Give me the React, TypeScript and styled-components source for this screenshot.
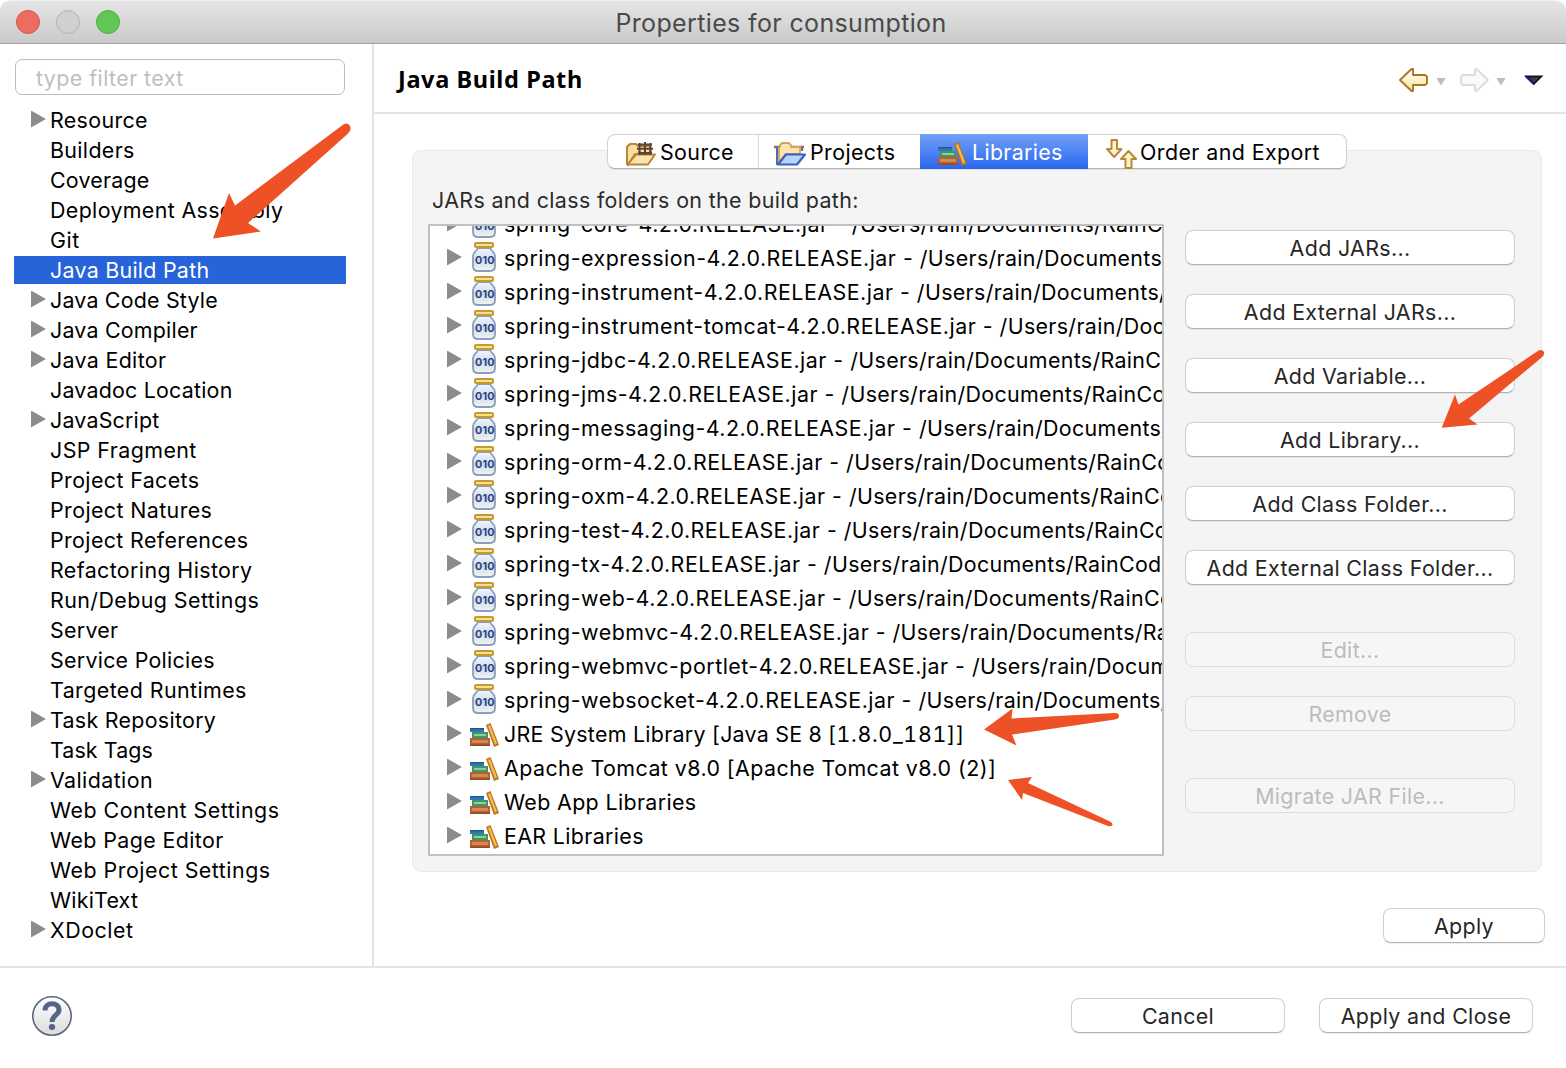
import React from "react";
import styled, { createGlobalStyle, css } from "styled-components";

const Global = createGlobalStyle`
  * { box-sizing: border-box; }
  html, body { margin: 0; padding: 0; background: #fff; }
  body { font-family: Inter, "Liberation Sans", sans-serif; font-size: 21.4px; letter-spacing: 0.37px; color: #000; overflow: hidden; }
`;

const Window = styled.div`
  position: relative;
  width: 1566px;
  height: 1068px;
  display: flex;
  flex-direction: column;
  background: #fff;
`;

const TitleBar = styled.header`
  height: 44px;
  flex: none;
  display: grid;
  grid-template-columns: 200px 1fr 204px;
  align-items: center;
  border-radius: 10px 10px 0 0;
  border-top: 1px solid #f2f2f2;
  border-bottom: 1px solid #a2a2a2;
  background: linear-gradient(#e5e5e5, #cacaca);
`;

const Lights = styled.div`
  display: flex;
  gap: 16px;
  padding-left: 16px;
`;

const Light = styled.span<{ $fill: string; $edge: string }>`
  width: 24px;
  height: 24px;
  border-radius: 50%;
  background: ${(p) => p.$fill};
  border: 1px solid ${(p) => p.$edge};
`;

const WindowTitle = styled.h1`
  margin: 0;
  text-align: center;
  font-size: 25px;
  font-weight: 400;
  letter-spacing: 0.36px;
  line-height: 40px;
  padding-top: 2px;
  color: #4a4a4a;
`;

const Body = styled.div`
  height: 922px;
  flex: none;
  display: flex;
`;

const Sidebar = styled.aside`
  width: 374px;
  flex: none;
  border-right: 2px solid #e4e4e4;
  padding: 15px 26px 0 14px;
`;

const Filter = styled.div`
  height: 36px;
  margin: 0 1px;
  padding-left: 20px;
  border: 1.5px solid #bdbdbd;
  border-radius: 7px;
  line-height: 37px;
  color: #bfbfbf;
  letter-spacing: 0.43px;
`;

const Tree = styled.ul`
  list-style: none;
  margin: 11px 0 0;
  padding: 0;
`;

const TreeItem = styled.li<{ $active?: boolean }>`
  height: 28px;
  margin-bottom: 2px;
  display: flex;
  align-items: center;
  padding-left: 17px;
  white-space: nowrap;
  ${(p) =>
    p.$active &&
    css`
      background: #2763d9;
      color: #fff;
    `}
`;

const Twisty = styled.span<{ $open?: boolean }>`
  width: 15px;
  height: 17px;
  flex: none;
  margin-top: -2px;
  background: ${(p) => (p.$open === false ? "none" : "#8c8c8c")};
  clip-path: polygon(0 0, 100% 50%, 0 100%);
`;

const Label = styled.span<{ $gap?: number; $track?: number }>`
  margin-left: ${(p) => p.$gap ?? 4}px;
  letter-spacing: ${(p) => p.$track ?? 0.4}px;
  line-height: 28px;
  white-space: pre;
`;

const Part = styled.span<{ $track: number; $tabular?: boolean }>`
  letter-spacing: ${(p) => p.$track}px;
  font-variant-numeric: ${(p) => (p.$tabular ? "tabular-nums" : "normal")};
`;

const Page = styled.main`
  flex: 1;
  display: flex;
  flex-direction: column;
`;

const PageHeader = styled.div`
  height: 70px;
  flex: none;
  display: flex;
  align-items: center;
  justify-content: space-between;
  padding: 0 22px 0 24px;
  border-bottom: 2px solid #e4e4e4;
`;

const PageTitle = styled.h2`
  margin: 2px 0 0;
  font-family: "Noto Sans", "Open Sans", sans-serif;
  font-size: 23.5px;
  font-weight: 700;
  letter-spacing: 0.62px;
`;

const Nav = styled.div`
  display: flex;
  align-items: center;
  margin-top: 4px;
`;

const Group = styled.section`
  width: 1130px;
  height: 722px;
  flex: none;
  margin: 36px 0 0 38px;
  padding: 0 27px 0 15px;
  background: #f4f4f4;
  border: 1px solid #e9e9e9;
  border-radius: 9px;
`;

const Tabs = styled.div`
  width: 740px;
  height: 35px;
  margin: -17px 0 0 179px;
  display: flex;
  background: #fff;
  border: 1px solid #d2d2d2;
  border-bottom-color: #b4b4b4;
  border-radius: 8px;
  box-shadow: 0 1px 1px rgba(0, 0, 0, 0.08);
`;

const Tab = styled.div<{ $w: number; $pad: number; $active?: boolean; $line?: boolean }>`
  width: ${(p) => p.$w}px;
  flex: none;
  display: flex;
  align-items: center;
  padding-left: ${(p) => p.$pad}px;
  border-right: ${(p) => (p.$line ? "1px solid #dadada" : "none")};
  ${(p) =>
    p.$active &&
    css`
      margin: -1px 0;
      color: #fff;
      background: linear-gradient(#72a1f8, #2a66ee);
    `}
  svg {
    flex: none;
    margin-top: 4px;
  }
`;

const Caption = styled.div`
  margin: 17px 0 0 4px;
  height: 28px;
  line-height: 28px;
  color: #2b2b2b;
`;

const Columns = styled.div`
  display: flex;
  margin-top: 10px;
  gap: 21px;
`;

const Table = styled.div`
  width: 736px;
  height: 632px;
  flex: none;
  overflow: hidden;
  border: 2px solid #c0c0c0;
  background: #fff;
`;

const Rows = styled.div`
  margin-top: -19px;
`;

const Row = styled.div`
  height: 34px;
  display: flex;
  align-items: center;
  padding-left: 17px;
`;

const IconCell = styled.span<{ $shift: number }>`
  width: 32px;
  height: 30px;
  flex: none;
  margin-left: 6px;
  margin-top: ${(p) => p.$shift}px;
  display: flex;
  justify-content: center;
  align-items: center;
`;

const Buttons = styled.div`
  display: flex;
  flex-direction: column;
  padding-top: 6px;
`;

const Button = styled.button<{ $w: number; $after?: number }>`
  width: ${(p) => p.$w}px;
  height: 35px;
  flex: none;
  margin: 0 0 ${(p) => p.$after ?? 0}px;
  padding: 0;
  font: inherit;
  letter-spacing: 0.34px;
  line-height: 30px;
  color: #262626;
  background: #fff;
  border: 1px solid #cfcfcf;
  border-bottom-color: #b2b2b2;
  border-radius: 8px;
  box-shadow: 0 1px 1px rgba(0, 0, 0, 0.07);
  white-space: nowrap;
  &:disabled {
    color: #bcbcbc;
    background: #f6f6f6;
    border-color: #dcdcdc;
    box-shadow: none;
  }
`;

const ApplyBar = styled.div`
  display: flex;
  justify-content: flex-end;
  padding: 36px 21px 0 0;
`;

const Footer = styled.footer`
  flex: 1;
  display: flex;
  align-items: flex-start;
  border-top: 2px solid #e4e4e4;
  padding: 28px 33px 0 32px;
`;

const FooterButtons = styled.div`
  display: flex;
  gap: 34px;
  margin-left: auto;
  padding-top: 2px;
`;

const Annotations = styled.svg`
  position: absolute;
  left: 0;
  top: 0;
  pointer-events: none;
`;

const Books = () => (
  <svg width="29" height="24" viewBox="0 0 29 24">
    <rect x="0" y="5" width="14" height="4" fill="#2f77b5" />
    <rect x="0" y="5" width="14" height="1.3" fill="#20568f" />
    <rect x="2" y="9" width="16" height="6" fill="#3f9564" />
    <rect x="4" y="11" width="12" height="2" fill="#8ccf9b" />
    <rect x="0" y="15" width="20" height="8" fill="#b75f30" />
    <rect x="2" y="17" width="16" height="3" fill="#d08a58" />
    <rect x="0" y="21.5" width="20" height="1.5" fill="#96481f" />
    <path d="M16 2 L20.5 0 L29 22 L24 24 Z" fill="#b97522" />
    <path d="M18 3 L20 2 L27 20.5 L25 21.5 Z" fill="#f5bd52" />
  </svg>
);

const Jar = () => (
  <svg width="24" height="30" viewBox="0 0 24 30">
    <defs>
      <linearGradient id="glass" x1="0" y1="0" x2="0" y2="1">
        <stop offset="0" stopColor="#f2f6fc" />
        <stop offset="0.55" stopColor="#cfdcf2" />
        <stop offset="1" stopColor="#f6f5ee" />
      </linearGradient>
    </defs>
    <path
      d="M6 6 H18 C19 9 23 10 23 14 V24 Q23 29 18 29 H6 Q1 29 1 24 V14 C1 10 5 9 6 6 Z"
      fill="url(#glass)"
      stroke="#8b9dbd"
      strokeWidth="1.8"
    />
    <rect x="3" y="1" width="18" height="4" rx="1" fill="#f8e08a" stroke="#c39a35" strokeWidth="2" />
    <text x="3" y="22.3" fontFamily="Inter, sans-serif" fontSize="10.8" fontWeight="700" letterSpacing="0" textLength="19.5" fill="#2d4478">
      010
    </text>
  </svg>
);

const SourceIcon = () => (
  <svg width="30" height="24" viewBox="0 0 30 24">
    <path d="M1 22 V5 L4 2 H10 L12 4 H24 V12 H9 L2 23 Z" fill="#f6dfa2" stroke="#b98636" strokeWidth="2" />
    <path d="M13.5 1 V12 M19 0 V12 M24.5 1 V12 M12 2.5 H26 M11 6.8 H27 M12 11 H26" stroke="#5d4238" strokeWidth="1.9" />
    <path d="M10 12.5 H29 L22 22.5 H1.5 Z" fill="#fbe5ad" stroke="#b98636" strokeWidth="2" strokeLinejoin="round" />
    <path d="M13.5 9 V13 M19 9 V13 M24.5 9 V13 M12.5 11.5 H25.5" stroke="#5d4238" strokeWidth="1.9" />
  </svg>
);

const ProjectsIcon = () => (
  <svg width="32" height="24" viewBox="0 0 32 24">
    <path d="M0 5 H30 M28 5 V9" fill="none" stroke="#87706e" strokeWidth="2.4" />
    <path d="M3 6 V22 H8" fill="none" stroke="#5169ae" strokeWidth="2" />
    <path d="M6 5 V3 L8 1 H15 L17 3 V5 H26 V12 H12 L5 20 V6 Z" fill="#fbe4ae" stroke="#d0a75a" strokeWidth="1.8" />
    <path d="M12 12.5 H31 L23 22.5 H4 Z" fill="#b5d5fa" stroke="#3d60bd" strokeWidth="2.2" strokeLinejoin="round" />
  </svg>
);

const OrderIcon = () => (
  <svg width="31" height="30" viewBox="0 0 31 30">
    <g fill="#fff4c9" stroke="#b58a3a" strokeWidth="2" strokeLinejoin="round">
      <path d="M5.5 1 H11 V10 H15.5 L8.2 18 L1 10 H5.5 Z" />
      <path d="M19.5 29 H25.5 V20 H30 L22.5 12 L15 20 H19.5 Z" />
    </g>
  </svg>
);

const HistoryArrow = ({ back }: { back?: boolean }) => (
  <svg width="29" height="24" viewBox="0 0 29 24" transform={back ? undefined : "scale(-1,1)"}>
    <defs>
      <linearGradient id="gold" x1="0" y1="0" x2="0" y2="1">
        <stop offset="0.2" stopColor="#fffdf0" />
        <stop offset="1" stopColor="#f9e08c" />
      </linearGradient>
    </defs>
    <path
      d="M1 12 L12.5 1 H14 V7 H26 L28 8.5 V15.5 L26 17 H14 V23 H12.5 Z"
      fill={back ? "url(#gold)" : "#f9f9f9"}
      stroke={back ? "#ab7527" : "#dcdcdc"}
      strokeWidth="1.9"
      strokeLinejoin="round"
    />
  </svg>
);

const Caret = styled.span<{ $left: number; $right: number }>`
  width: 10px;
  height: 8px;
  margin: 3px ${(p) => p.$right}px 0 ${(p) => p.$left}px;
  background: #bdbdbd;
  clip-path: polygon(0 0, 100% 0, 50% 100%);
`;

const MenuTriangle = () => (
  <svg width="20" height="11" viewBox="0 0 20 11">
    <path d="M0.5 0.5 H19.5 L10 10 Z" fill="#1c1028" />
    <path d="M4.5 2.5 H15 L10 7.5 Z" fill="#443b4a" />
    <path d="M1 1 L10 9.7" stroke="#2b149a" strokeWidth="1.4" />
  </svg>
);

const HelpIcon = () => (
  <svg width="40" height="40" viewBox="0 0 40 40">
    <defs>
      <linearGradient id="help" x1="0" y1="0" x2="0" y2="1">
        <stop offset="0" stopColor="#ffffff" />
        <stop offset="1" stopColor="#dcdcdc" />
      </linearGradient>
    </defs>
    <circle cx="20" cy="20" r="19.2" fill="url(#help)" stroke="#5d6783" strokeWidth="1.6" />
    <path d="M13 14.5 C13 5.5 27 5.5 27 14 C27 19 20 19 20 26" fill="none" stroke="#56648a" strokeWidth="5" />
    <ellipse cx="20" cy="31" rx="3.2" ry="2.9" fill="#56648a" />
  </svg>
);

type Node = { name: string; kids?: boolean; active?: boolean; track?: number };

const tree: Node[] = [
  { name: "Resource", kids: true, track: 0.35 },
  { name: "Builders", track: 0.35 },
  { name: "Coverage", track: 0.22 },
  { name: "Deployment Assembly", track: 0.36 },
  { name: "Git", track: 0.6 },
  { name: "Java Build Path", active: true, track: 0.27 },
  { name: "Java Code Style", kids: true, track: 0.2 },
  { name: "Java Compiler", kids: true, track: 0.22 },
  { name: "Java Editor", kids: true, track: 0.33 },
  { name: "Javadoc Location", track: 0.22 },
  { name: "JavaScript", kids: true, track: 0.2 },
  { name: "JSP Fragment", track: 0.43 },
  { name: "Project Facets", track: 0.39 },
  { name: "Project Natures", track: 0.4 },
  { name: "Project References", track: 0.38 },
  { name: "Refactoring History", track: 0.39 },
  { name: "Run/Debug Settings", track: 0.43 },
  { name: "Server", track: 0.27 },
  { name: "Service Policies", track: 0.27 },
  { name: "Targeted Runtimes", track: 0.42 },
  { name: "Task Repository", kids: true, track: 0.3 },
  { name: "Task Tags", track: 0.1 },
  { name: "Validation", kids: true, track: 0.42 },
  { name: "Web Content Settings", track: 0.5 },
  { name: "Web Page Editor", track: 0.4 },
  { name: "Web Project Settings", track: 0.5 },
  { name: "WikiText", track: 0.22 },
  { name: "XDoclet", kids: true, track: 0.55 },
];

const jars = [
  "core", "expression", "instrument", "instrument-tomcat", "jdbc", "jms", "messaging", "orm",
  "oxm", "test", "tx", "web", "webmvc", "webmvc-portlet", "websocket",
];

type Segment = { text: string; track: number; tabular?: boolean };

const libraries: Segment[][] = [
  [
    { text: "JRE System Library ", track: 0.28 },
    { text: "[Java SE 8 [", track: 0.25 },
    { text: "1.8.0_181]]", track: 0.68, tabular: true },
  ],
  [{ text: "Apache Tomcat v8.0 [Apache Tomcat v8.0 (2)]", track: 0.44 }],
  [{ text: "Web App Libraries", track: 0.36 }],
  [{ text: "EAR Libraries", track: 0.36 }],
];

const actions = [
  { name: "Add JARs...", after: 29 },
  { name: "Add External JARs...", after: 29 },
  { name: "Add Variable...", after: 29 },
  { name: "Add Library...", after: 29 },
  { name: "Add Class Folder...", after: 29 },
  { name: "Add External Class Folder...", after: 47 },
  { name: "Edit...", after: 29, off: true },
  { name: "Remove", after: 47, off: true },
  { name: "Migrate JAR File...", after: 0, off: true },
];

export default function App() {
  return (
    <Window>
      <Global />
      <TitleBar>
        <Lights>
          <Light $fill="#ed6b60" $edge="#d6574c" />
          <Light $fill="#d0d0d0" $edge="#b4b4b4" />
          <Light $fill="#61c654" $edge="#4fae43" />
        </Lights>
        <WindowTitle>Properties for consumption</WindowTitle>
      </TitleBar>
      <Body>
        <Sidebar>
          <Filter>type filter text</Filter>
          <Tree>
            {tree.map((n) => (
              <TreeItem key={n.name} $active={n.active}>
                <Twisty $open={!!n.kids} />
                <Label $track={n.track}>{n.name}</Label>
              </TreeItem>
            ))}
          </Tree>
        </Sidebar>
        <Page>
          <PageHeader>
            <PageTitle>Java Build Path</PageTitle>
            <Nav>
              <HistoryArrow back />
              <Caret $left={8} $right={14} />
              <HistoryArrow />
              <Caret $left={7} $right={18} />
              <MenuTriangle />
            </Nav>
          </PageHeader>
          <Group>
            <Tabs>
              <Tab $w={151} $pad={18} $line>
                <SourceIcon />
                <Label>Source</Label>
              </Tab>
              <Tab $w={161} $pad={15}>
                <ProjectsIcon />
                <Label>Projects</Label>
              </Tab>
              <Tab $w={168} $pad={18} $active>
                <Books />
                <Label $gap={5} $track={0.32}>Libraries</Label>
              </Tab>
              <Tab $w={258} $pad={18}>
                <OrderIcon />
                <Label $gap={3} $track={0.42}>Order and Export</Label>
              </Tab>
            </Tabs>
            <Caption>JARs and class folders on the build path:</Caption>
            <Columns>
              <Table>
                <Rows>
                  {jars.map((j) => (
                    <Row key={j}>
                      <Twisty />
                      <IconCell $shift={-2}>
                        <Jar />
                      </IconCell>
                      <Label>
                        <Part $track={0.5}>{`spring-${j}-4.2.0.RELEASE.jar - `}</Part>
                        <Part $track={0.34}>/Users/rain/Documents/RainCode</Part>
                      </Label>
                    </Row>
                  ))}
                  {libraries.map((segments) => (
                    <Row key={segments[0].text}>
                      <Twisty />
                      <IconCell $shift={1}>
                        <Books />
                      </IconCell>
                      <Label>
                        {segments.map((s) => (
                          <Part key={s.text} $track={s.track} $tabular={s.tabular}>
                            {s.text}
                          </Part>
                        ))}
                      </Label>
                    </Row>
                  ))}
                </Rows>
              </Table>
              <Buttons>
                {actions.map((a) => (
                  <Button key={a.name} $w={330} $after={a.after} disabled={a.off}>
                    {a.name}
                  </Button>
                ))}
              </Buttons>
            </Columns>
          </Group>
          <ApplyBar>
            <Button $w={162}>Apply</Button>
          </ApplyBar>
        </Page>
      </Body>
      <Footer>
        <HelpIcon />
        <FooterButtons>
          <Button $w={214}>Cancel</Button>
          <Button $w={214}>Apply and Close</Button>
        </FooterButtons>
      </Footer>
      <Annotations width="1566" height="1068" viewBox="0 0 1566 1068" fill="#ee5125">
        <path d="M213 238.5 L229 193 L235 205.5 L342 125.5 Q347 121.5 350 126 Q352 130 347.5 134 L248 223 L261 231.5 Z" />
        <path d="M1441.7 427.7 L1455 394.5 L1458.5 404.5 L1537 351.5 Q1542 348.5 1544 352 Q1545 355 1541 358 L1469 418.5 L1477.5 424.5 Z" />
        <path d="M984 729.5 L1012.5 708.5 L1011.5 718.5 L1115 713 Q1119 713 1119 716 Q1119 719 1115 719.5 L1012 734.5 L1016.5 745.5 Z" />
        <path d="M1008 780 L1032 777 L1028 783 L1110 821.5 Q1113 823 1112.5 825 Q1111 827 1108 826 L1023 793 L1022 800 Z" />
      </Annotations>
    </Window>
  );
}
